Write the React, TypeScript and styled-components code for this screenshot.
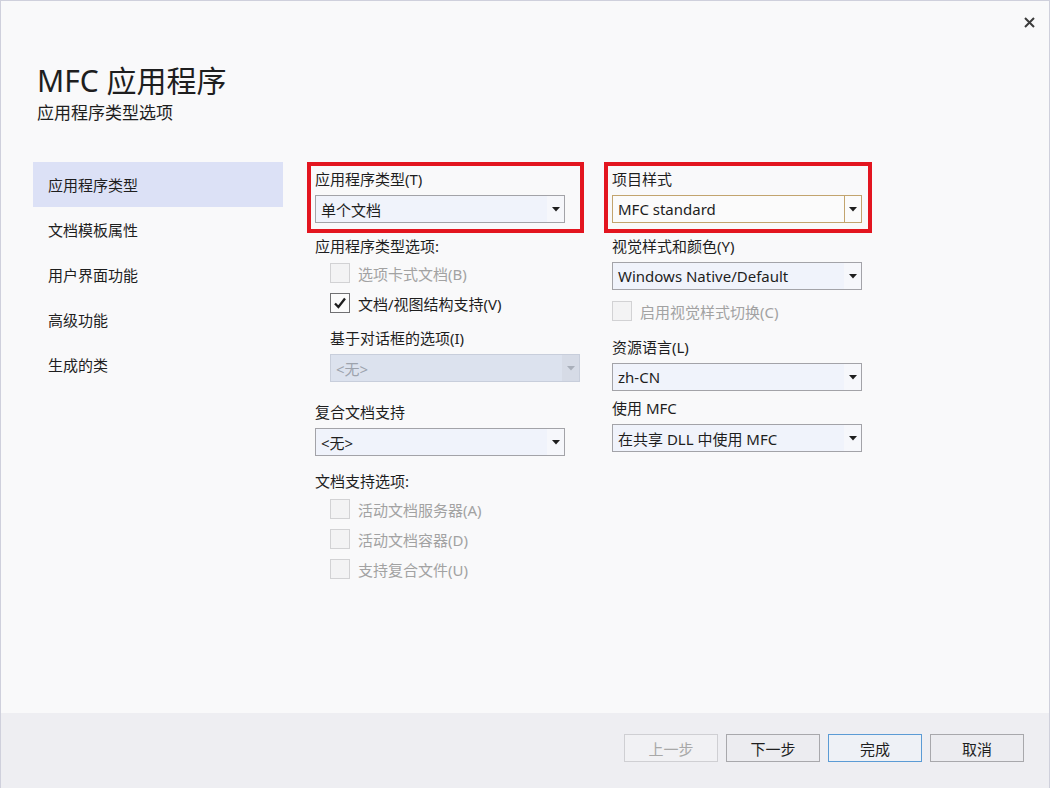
import React from 'react';
import styled, {createGlobalStyle} from "styled-components";

const GlobalStyle = createGlobalStyle`
  html, body {
    margin: 0;
    padding: 0;
    background: #f9f9fa;
  }
  * {
    box-sizing: border-box;
  }
  body {
    font-family: "Noto Sans", "Noto Sans CJK SC", sans-serif;
    color: #1e1e1e;
  }
`

const navItems = ["应用程序类型", "文档模板属性", "用户界面功能", "高级功能", "生成的类"]

const Arrow = () => (
    <svg width="8" height="5" viewBox="0 0 8 5">
        <path d="M0 0 L8 0 L4 4.5 Z" fill="currentColor"/>
    </svg>
)

const CheckMark = () => (
    <svg width="14" height="14" viewBox="0 0 14 14">
        <path d="M2 7.5 L5.4 11 L12 2.5" fill="none" stroke="#1e1e1e" strokeWidth="2.3"/>
    </svg>
)

type SelectProps = {
    value: string
    disabled?: boolean
    focused?: boolean
    indent?: boolean
}

const Select = ({value, disabled, focused, indent}: SelectProps) => (
    <SelectBox $disabled={disabled} $focused={focused} $indent={indent}>
        <SelectValue>{value}</SelectValue>
        <SelectButton $disabled={disabled} $focused={focused}>
            <Arrow/>
        </SelectButton>
    </SelectBox>
)

type CheckProps = {
    label: string
    checked?: boolean
    disabled?: boolean
    flush?: boolean
}

const Check = ({label, checked, disabled, flush}: CheckProps) => (
    <CheckRow $disabled={disabled} $flush={flush}>
        <CheckBox $disabled={disabled}>{checked && <CheckMark/>}</CheckBox>
        <span>{label}</span>
    </CheckRow>
)

export default function App() {
    return (
        <>
            <GlobalStyle/>
            <Window>
                <TitleBar>
                    <CloseButton>
                        <svg width="11" height="11" viewBox="0 0 11 11">
                            <path d="M1 1 L10 10 M10 1 L1 10" stroke="#3c3c3c" strokeWidth="2"/>
                        </svg>
                    </CloseButton>
                </TitleBar>
                <Header>
                    <Title>MFC 应用程序</Title>
                    <Subtitle>应用程序类型选项</Subtitle>
                </Header>
                <Body>
                    <Nav>
                        {navItems.map((item, i) => (
                            <NavItem key={item} $active={i === 0}>{item}</NavItem>
                        ))}
                    </Nav>
                    <Column>
                        <Field $highlight $frameRight={19}>
                            <Label>应用程序类型(T)</Label>
                            <Select value="单个文档"/>
                        </Field>
                        <Label $top={13}>应用程序类型选项:</Label>
                        <CheckList $top={2}>
                            <Check label="选项卡式文档(B)" disabled/>
                            <Check label="文档/视图结构支持(V)" checked/>
                        </CheckList>
                        <Label $top={10} $indent>基于对话框的选项(I)</Label>
                        <Select value="<无>" disabled indent/>
                        <Label $top={20}>复合文档支持</Label>
                        <Select value="<无>"/>
                        <Label $top={15}>文档支持选项:</Label>
                        <CheckList $top={3}>
                            <Check label="活动文档服务器(A)" disabled/>
                            <Check label="活动文档容器(D)" disabled/>
                            <Check label="支持复合文件(U)" disabled/>
                        </CheckList>
                    </Column>
                    <Column>
                        <Field $highlight $frameRight={10}>
                            <Label>项目样式</Label>
                            <Select value="MFC standard" focused/>
                        </Field>
                        <Label $top={13}>视觉样式和颜色(Y)</Label>
                        <Select value="Windows Native/Default"/>
                        <CheckList $top={6}>
                            <Check label="启用视觉样式切换(C)" disabled flush/>
                        </CheckList>
                        <Label $top={11}>资源语言(L)</Label>
                        <Select value="zh-CN"/>
                        <Label $top={7}>使用 MFC</Label>
                        <Select value="在共享 DLL 中使用 MFC"/>
                    </Column>
                </Body>
                <Footer>
                    <Button disabled>上一步</Button>
                    <Button>下一步</Button>
                    <Button $primary>完成</Button>
                    <Button>取消</Button>
                </Footer>
            </Window>
        </>
    )
}

const Window = styled.div`
  display: flex;
  flex-direction: column;
  height: 100vh;
  border: 1px solid #cfd0dc;
  border-bottom: none;
  background: #f9f9fa;
`

const TitleBar = styled.div`
  display: flex;
  justify-content: flex-end;
  padding: 13px 11px 0 0;
  height: 44px;
`

const CloseButton = styled.div`
  width: 17px;
  height: 17px;
  display: flex;
  align-items: center;
  justify-content: center;
`

const Header = styled.header`
  padding: 16px 0 0 36px;
  height: 117px;
`

const Title = styled.h1`
  margin: 0;
  font-size: 30px;
  font-weight: 400;
  line-height: 40px;
  color: #1e1e1e;
`

const Subtitle = styled.div`
  font-size: 17px;
  line-height: 24px;
  color: #1e1e1e;
`

const Body = styled.main`
  display: flex;
  gap: 32px;
  padding-left: 32px;
  flex: 1;
`

const Nav = styled.nav`
  width: 250px;
  display: flex;
  flex-direction: column;
`

const NavItem = styled.div<{ $active?: boolean }>`
  height: 45px;
  display: flex;
  align-items: center;
  padding-left: 15px;
  padding-bottom: 1px;
  font-size: 15px;
  background: ${p => p.$active ? "#dce1f6" : "transparent"};
`

const Column = styled.section`
  width: 265px;
  display: flex;
  flex-direction: column;
  padding-top: 7px;
`

const Field = styled.div<{ $highlight?: boolean, $frameRight: number }>`
  position: relative;
  width: 250px;
  display: flex;
  flex-direction: column;

  &::after {
    content: "";
    display: ${p => p.$highlight ? "block" : "none"};
    position: absolute;
    top: -7px;
    left: -8px;
    bottom: -10px;
    right: -${p => p.$frameRight}px;
    border: 4px solid #e3151f;
    pointer-events: none;
  }
`

const Label = styled.div<{ $top?: number, $indent?: boolean }>`
  font-size: 15px;
  line-height: 20px;
  margin-top: ${p => p.$top || 0}px;
  padding-left: ${p => p.$indent ? 15 : 0}px;
  white-space: nowrap;
`

const SelectBox = styled.div<{ $disabled?: boolean, $focused?: boolean, $indent?: boolean }>`
  width: 250px;
  height: 28px;
  margin-top: 6px;
  margin-left: ${p => p.$indent ? 15 : 0}px;
  display: flex;
  border: 1px solid ${p => p.$focused ? "#c2a46e" : p.$disabled ? "#c8cedb" : "#a3a3a8"};
  background: ${p => p.$focused ? "#fbfbfb" : p.$disabled ? "#dce2ee" : "#f0f3fb"};
  color: ${p => p.$disabled ? "#9da3ad" : "#1e1e1e"};
`

const SelectValue = styled.div`
  flex: 1;
  display: flex;
  align-items: center;
  padding-left: 5px;
  font-size: 15px;
  white-space: nowrap;
  overflow: hidden;
`

const SelectButton = styled.div<{ $disabled?: boolean, $focused?: boolean }>`
  width: 17px;
  display: flex;
  align-items: center;
  justify-content: center;
  padding-top: 1px;
  border-left: 1px solid ${p => p.$focused ? "#c2a46e" : "transparent"};
  background: ${p => p.$focused ? "#fbfbfb" : p.$disabled ? "#d6dbe6" : "#f6f7fb"};
  color: ${p => p.$disabled ? "#a9afba" : "#1e1e1e"};
`

const CheckList = styled.div<{ $top?: number }>`
  display: flex;
  flex-direction: column;
  margin-top: ${p => p.$top || 0}px;
`

const CheckRow = styled.label<{ $disabled?: boolean, $flush?: boolean }>`
  height: 30px;
  display: flex;
  align-items: center;
  gap: 8px;
  padding-left: ${p => p.$flush ? 0 : 15}px;
  font-size: 15px;
  white-space: nowrap;
  color: ${p => p.$disabled ? "#a2a2a2" : "#1e1e1e"};
`

const CheckBox = styled.span<{ $disabled?: boolean }>`
  width: 20px;
  height: 20px;
  display: flex;
  align-items: center;
  justify-content: center;
  border: 1px solid ${p => p.$disabled ? "#d2d2d4" : "#707072"};
  background: ${p => p.$disabled ? "#f3f3f4" : "#fbfbfb"};
`

const Footer = styled.footer`
  height: 75px;
  display: flex;
  justify-content: flex-end;
  align-items: flex-start;
  gap: 8px;
  padding: 21px 25px 0 0;
  background: #eeeef2;
`

const Button = styled.button<{ $primary?: boolean }>`
  width: 94px;
  height: 28px;
  font-family: "Noto Sans", "Noto Sans CJK SC", sans-serif;
  font-size: 15px;
  color: #1e1e1e;
  background: ${p => p.$primary ? "#eef1f6" : "#ececf0"};
  border: 1px solid ${p => p.$primary ? "#5b9bd5" : "#a8a8ac"};
  padding: 0;

  &:disabled {
    color: #a8a8a8;
    border-color: #cfcfd3;
    background: #f1f1f4;
  }
`
